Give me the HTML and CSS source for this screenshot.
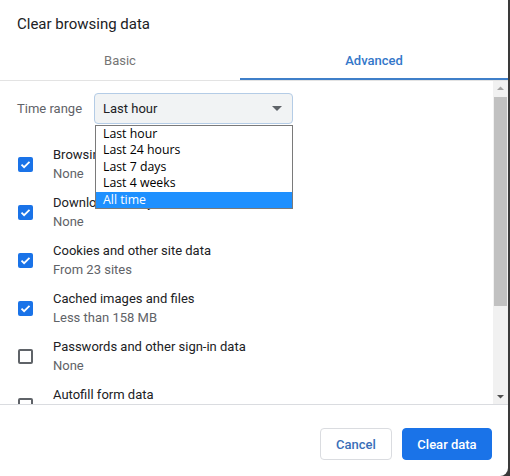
FILE: index.html
```html
<!DOCTYPE html>
<html>
<head>
<meta charset="utf-8">
<link rel="stylesheet" href="styles.css">
</head>
<body>
<div class="dialog">
  <div class="title">Clear browsing data</div>
  <div class="tabs">
    <div class="tab">Basic</div>
    <div class="tab active">Advanced</div>
  </div>
  <div class="body">
    <div class="content">
      <div class="range-row">
        <span class="range-label">Time range</span>
        <div class="select-wrap">
          <div class="select">
            <span>Last hour</span>
            <svg class="caret" width="10" height="5" viewBox="0 0 10 5"><path d="M0 0h10L5 5z" fill="#5f6368"/></svg>
          </div>
          <ul class="dropdown">
            <li>Last hour</li>
            <li>Last 24 hours</li>
            <li>Last 7 days</li>
            <li>Last 4 weeks</li>
            <li class="selected">All time</li>
          </ul>
        </div>
      </div>
      <div class="item">
        <span class="cb checked"><svg width="15" height="15" viewBox="0 0 15 15"><path d="M3.5 7.6l2.6 2.6 5.4-5.4" fill="none" stroke="#fff" stroke-width="1.8"/></svg></span>
        <div class="texts"><div class="name">Browsing history</div><div class="sub">None</div></div>
      </div>
      <div class="item">
        <span class="cb checked"><svg width="15" height="15" viewBox="0 0 15 15"><path d="M3.5 7.6l2.6 2.6 5.4-5.4" fill="none" stroke="#fff" stroke-width="1.8"/></svg></span>
        <div class="texts"><div class="name">Download history</div><div class="sub">None</div></div>
      </div>
      <div class="item">
        <span class="cb checked"><svg width="15" height="15" viewBox="0 0 15 15"><path d="M3.5 7.6l2.6 2.6 5.4-5.4" fill="none" stroke="#fff" stroke-width="1.8"/></svg></span>
        <div class="texts"><div class="name">Cookies and other site data</div><div class="sub">From 23 sites</div></div>
      </div>
      <div class="item">
        <span class="cb checked"><svg width="15" height="15" viewBox="0 0 15 15"><path d="M3.5 7.6l2.6 2.6 5.4-5.4" fill="none" stroke="#fff" stroke-width="1.8"/></svg></span>
        <div class="texts"><div class="name">Cached images and files</div><div class="sub">Less than 158 MB</div></div>
      </div>
      <div class="item">
        <span class="cb"></span>
        <div class="texts"><div class="name">Passwords and other sign-in data</div><div class="sub">None</div></div>
      </div>
      <div class="item last">
        <span class="cb"></span>
        <div class="texts"><div class="name">Autofill form data</div></div>
      </div>
    </div>
    <div class="scrollbar">
      <svg class="arrow" width="15" height="14" viewBox="0 0 15 14"><path d="M4 9h7L7.5 5.5z" fill="#a3a3a3"/></svg>
      <div class="track"><div class="thumb"></div></div>
      <svg class="arrow" width="15" height="14" viewBox="0 0 15 14"><path d="M4 5h7L7.5 8.5z" fill="#505050"/></svg>
    </div>
  </div>
  <div class="footer">
    <button class="btn cancel">Cancel</button>
    <button class="btn primary">Clear data</button>
  </div>
</div>
</body>
</html>
```
FILE: styles.css
```css
html, body {
  margin: 0;
  padding: 0;
}
body {
  width: 510px;
  height: 476px;
  background: #3a3a3a;
  font-family: Roboto, "Liberation Sans", Arial, sans-serif;
  overflow: hidden;
}
.dialog {
  width: 508px;
  height: 476px;
  background: #fff;
  border-bottom-right-radius: 8px;
  display: flex;
  flex-direction: column;
}
.title {
  font-size: 15px;
  color: #202124;
  padding: 15px 0 0 17px;
  height: 25px;
  line-height: 18px;
}
.tabs {
  display: grid;
  grid-template-columns: 240px 1fr;
  height: 40px;
  border-bottom: 1px solid #e3e3e3;
}
.tab {
  display: flex;
  align-items: center;
  justify-content: center;
  font-size: 13px;
  color: #757575;
  font-weight: 400;
}
.tab.active {
  color: #3477c9;
  font-weight: 500;
  border-bottom: 2px solid #3f7fc9;
  padding-top: 2px;
}
.body {
  height: 323px;
  display: flex;
  position: relative;
}
.content {
  flex: 1;
  overflow: hidden;
}
.range-row {
  display: flex;
  align-items: center;
  padding: 11px 0 0 17px;
  height: 32px;
  margin-bottom: 16px;
}
.range-label {
  font-size: 13px;
  color: #5f6368;
  width: 77px;
}
.select-wrap {
  position: relative;
}
.select {
  width: 199px;
  height: 31px;
  box-sizing: border-box;
  background: #f1f3f4;
  border: 1px solid #b4cce6;
  border-radius: 4px;
  display: flex;
  align-items: center;
  justify-content: space-between;
  padding: 0 8px 0 8px;
  font-size: 13px;
  color: #202124;
}
.caret {
  margin-right: 2px;
}
.dropdown {
  position: absolute;
  left: 1px;
  top: 32px;
  width: 198px;
  box-sizing: border-box;
  margin: 0;
  padding: 0;
  list-style: none;
  background: #fff;
  border: 1px solid #7a7a7a;
  font-family: "Open Sans", "Noto Sans", sans-serif;
  font-size: 12.3px;
  color: #000;
  z-index: 2;
}
.dropdown li {
  height: 16.6px;
  line-height: 16.6px;
  padding-left: 7px;
}
.dropdown li.selected {
  background: #1e90ff;
  color: #fff;
}
.item {
  display: flex;
  align-items: center;
  height: 48px;
  padding-left: 18px;
}
.item.last {
  align-items: flex-start;
  padding-top: 7px;
  box-sizing: border-box;
}
.item.last .cb {
  margin-top: 11px;
}
.cb {
  width: 15px;
  height: 15px;
  box-sizing: border-box;
  border: 2px solid #5f6368;
  border-radius: 2px;
  margin-right: 20px;
  flex: none;
  display: flex;
}
.cb.checked {
  border: none;
  background: #1a73e8;
}
.texts {
  display: flex;
  flex-direction: column;
  gap: 3px;
}
.name {
  font-size: 13px;
  color: #202124;
  line-height: 16px;
}
.sub {
  font-size: 13px;
  color: #5f6368;
  line-height: 16px;
}
.scrollbar {
  width: 15px;
  background: #f1f1f1;
  display: flex;
  flex-direction: column;
}
.arrow {
  flex: none;
  display: block;
}
.track {
  flex: 1;
  padding: 2px 1px;
}
.thumb {
  height: 209px;
  background: #c1c1c1;
}
.footer {
  flex: 1;
  border-top: 1px solid #dadce0;
  display: flex;
  justify-content: flex-end;
  align-items: flex-start;
  padding: 23px 16px 0 0;
  gap: 10px;
}
.btn {
  height: 32px;
  border-radius: 4px;
  font-family: Roboto, "Liberation Sans", Arial, sans-serif;
  font-size: 13px;
  font-weight: 500;
  padding: 0;
  white-space: nowrap;
}
.cancel {
  background: #fff;
  border: 1px solid #dadce0;
  color: #3a6fb8;
  width: 72px;
}
.primary {
  background: #1a73e8;
  border: 1px solid #1a73e8;
  color: #fff;
  width: 90px;
}
```
